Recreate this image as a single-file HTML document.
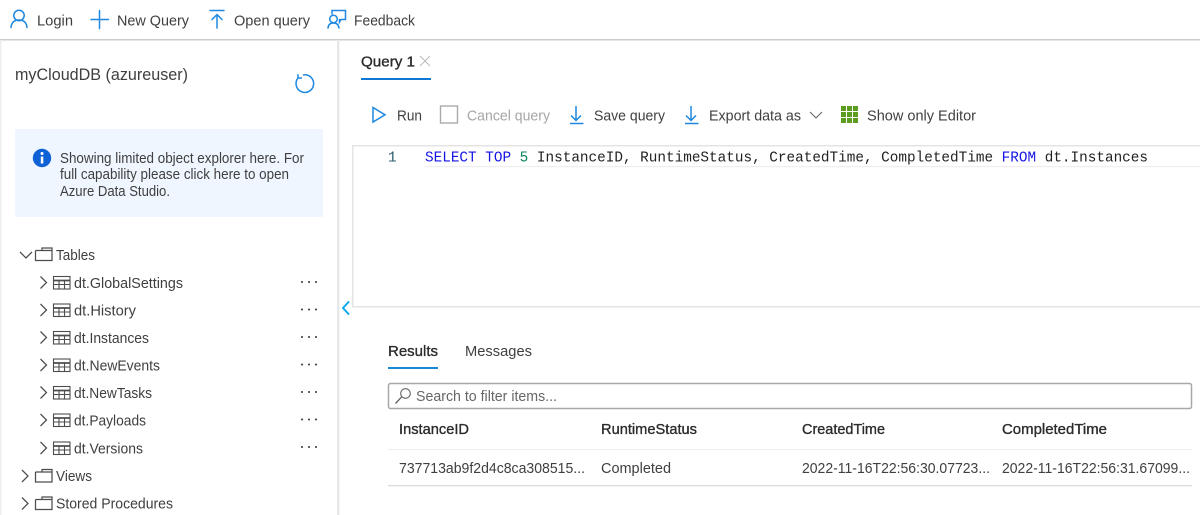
<!DOCTYPE html>
<html><head><meta charset="utf-8"><style>
html,body{margin:0;padding:0;background:#fff;width:1200px;height:515px;overflow:hidden}
svg{display:block}
text{font-family:"Liberation Sans",sans-serif;font-size:15px;fill:#3f3f3f;white-space:pre}
.b{fill:#2b2b2b;font-size:15px;stroke:#2b2b2b;stroke-width:.35}
.m{font-family:"Liberation Mono",monospace;font-size:14.35px;fill:#222}
.i{fill:none;stroke:#1f88e0;stroke-width:1.5}
.k{fill:none;stroke:#4d4d4d;stroke-width:1.25}
.d{fill:#333}
</style></head><body>
<svg width="1200" height="515" viewBox="0 0 1200 515" xmlns="http://www.w3.org/2000/svg">
<rect x="0" y="39" width="1200" height="1.5" fill="#ccc"/>
<rect x="0" y="40" width="1.5" height="475" fill="#eee"/>
<rect x="337" y="40" width="2.5" height="475" fill="#e8e8e8"/>

<!-- top toolbar -->
<g class="i" stroke-linecap="round">
<circle cx="19" cy="15.500" r="5.200"/><path d="M11 27.500c.5-5 3.500-7.500 8-7.500s7.500 2.500 8 7.500"/>
<path d="M99.500 10.500v18M91 19.500h17.500"/>
<path d="M210 10.500h14M217 14.500v13.500M212 19.500l5-5 5 5"/>
<circle cx="333.500" cy="19" r="3.800"/><path d="M328 28c.3-3.500 2.500-5 5.500-5s5 1.500 5.500 5"/><path d="M332 14v-3.500h13.500v9h-4.500l-1.500 2.500v-2.500"/>
</g>
<text x="37" y="25.500" textLength="36" lengthAdjust="spacingAndGlyphs">Login</text>
<text x="117" y="25.500" textLength="72" lengthAdjust="spacingAndGlyphs">New Query</text>
<text x="234" y="25.500" textLength="76" lengthAdjust="spacingAndGlyphs">Open query</text>
<text x="354" y="25.500" textLength="61" lengthAdjust="spacingAndGlyphs">Feedback</text>

<!-- sidebar -->
<text x="15" y="80" style="font-size:16.500px" textLength="173" lengthAdjust="spacingAndGlyphs">myCloudDB (azureuser)</text>
<path class="i" d="M303 75A8.800 8.800 0 1 1 298.500 77.500M298 74.300v3.700h4"/>
<rect x="15" y="129" width="308" height="88" rx="2" fill="#eff6ff"/>
<circle cx="42" cy="158" r="9.200" fill="#0f62d6"/>
<rect x="40.800" y="156.500" width="2.500" height="7" fill="#fff"/><circle cx="42" cy="153.500" r="1.500" fill="#fff"/>
<text x="60" y="163" style="font-size:14.500px" textLength="244" lengthAdjust="spacingAndGlyphs">Showing limited object explorer here. For</text>
<text x="60" y="179" style="font-size:14.500px" textLength="229" lengthAdjust="spacingAndGlyphs">full capability please click here to open</text>
<text x="60" y="196" style="font-size:14.500px" textLength="110" lengthAdjust="spacingAndGlyphs">Azure Data Studio.</text>

<!-- tree -->
<g class="k">
<path d="M20 252l6 6 6-6"/>
<path d="M35.500 250.500h6.500M35.500 250.500v10h16.500v-12.500h-10v2.500M42 250.500h10"/>
<path d="M35.500 472h6.500M35.500 472v10h16.500v-12.500h-10v2.500M42 472h10"/>
<path d="M35.500 499.500h6.500M35.500 499.500v10h16.500v-12.500h-10v2.500M42 499.500h10"/>
<path d="M22 470l6 6-6 6M22 497.500l6 6-6 6"/>
<path d="M40.500 276.500l6 6-6 6M40.500 304l6 6-6 6M40.500 331.500l6 6-6 6M40.500 359l6 6-6 6M40.500 386.500l6 6-6 6M40.500 414l6 6-6 6M40.500 442l6 6-6 6"/>
</g>
<g fill="none" stroke="#4d4d4d" stroke-width="1.100">
<g><rect x="53.500" y="276.500" width="16.500" height="12.500"/><path d="M53.500 280.500h16.500" stroke-width="1.800"/><path d="M53.500 284.500h16.500M59 280.500v8.500M64.500 280.500v8.500"/></g>
<g transform="translate(0 27.500)"><rect x="53.500" y="276.500" width="16.500" height="12.500"/><path d="M53.500 280.500h16.500" stroke-width="1.800"/><path d="M53.500 284.500h16.500M59 280.500v8.500M64.500 280.500v8.500"/></g>
<g transform="translate(0 55)"><rect x="53.500" y="276.500" width="16.500" height="12.500"/><path d="M53.500 280.500h16.500" stroke-width="1.800"/><path d="M53.500 284.500h16.500M59 280.500v8.500M64.500 280.500v8.500"/></g>
<g transform="translate(0 82.500)"><rect x="53.500" y="276.500" width="16.500" height="12.500"/><path d="M53.500 280.500h16.500" stroke-width="1.800"/><path d="M53.500 284.500h16.500M59 280.500v8.500M64.500 280.500v8.500"/></g>
<g transform="translate(0 110)"><rect x="53.500" y="276.500" width="16.500" height="12.500"/><path d="M53.500 280.500h16.500" stroke-width="1.800"/><path d="M53.500 284.500h16.500M59 280.500v8.500M64.500 280.500v8.500"/></g>
<g transform="translate(0 137.500)"><rect x="53.500" y="276.500" width="16.500" height="12.500"/><path d="M53.500 280.500h16.500" stroke-width="1.800"/><path d="M53.500 284.500h16.500M59 280.500v8.500M64.500 280.500v8.500"/></g>
<g transform="translate(0 165.500)"><rect x="53.500" y="276.500" width="16.500" height="12.500"/><path d="M53.500 280.500h16.500" stroke-width="1.800"/><path d="M53.500 284.500h16.500M59 280.500v8.500M64.500 280.500v8.500"/></g>
</g>
<text x="56" y="260" textLength="39" lengthAdjust="spacingAndGlyphs">Tables</text>
<text x="74" y="288" textLength="109" lengthAdjust="spacingAndGlyphs">dt.GlobalSettings</text>
<text x="74" y="315.500" textLength="62" lengthAdjust="spacingAndGlyphs">dt.History</text>
<text x="74" y="343" textLength="75" lengthAdjust="spacingAndGlyphs">dt.Instances</text>
<text x="74" y="370.500" textLength="86" lengthAdjust="spacingAndGlyphs">dt.NewEvents</text>
<text x="74" y="398" textLength="78" lengthAdjust="spacingAndGlyphs">dt.NewTasks</text>
<text x="74" y="425.500" textLength="72" lengthAdjust="spacingAndGlyphs">dt.Payloads</text>
<text x="74" y="453.500" textLength="69" lengthAdjust="spacingAndGlyphs">dt.Versions</text>
<text x="56" y="481" textLength="36" lengthAdjust="spacingAndGlyphs">Views</text>
<text x="56" y="508.500" textLength="117" lengthAdjust="spacingAndGlyphs">Stored Procedures</text>
<g class="d">
<circle cx="302" cy="282" r="1"/><circle cx="309" cy="282" r="1"/><circle cx="316" cy="282" r="1"/>
<circle cx="302" cy="309.500" r="1"/><circle cx="309" cy="309.500" r="1"/><circle cx="316" cy="309.500" r="1"/>
<circle cx="302" cy="337" r="1"/><circle cx="309" cy="337" r="1"/><circle cx="316" cy="337" r="1"/>
<circle cx="302" cy="364.500" r="1"/><circle cx="309" cy="364.500" r="1"/><circle cx="316" cy="364.500" r="1"/>
<circle cx="302" cy="392" r="1"/><circle cx="309" cy="392" r="1"/><circle cx="316" cy="392" r="1"/>
<circle cx="302" cy="419.500" r="1"/><circle cx="309" cy="419.500" r="1"/><circle cx="316" cy="419.500" r="1"/>
<circle cx="302" cy="447" r="1"/><circle cx="309" cy="447" r="1"/><circle cx="316" cy="447" r="1"/>
</g>
<path d="M349 301.500l-6 6.500 6 6.500" fill="none" stroke="#00a4ef" stroke-width="1.800"/>

<!-- query tab -->
<text x="361" y="66.500" class="b" textLength="54" lengthAdjust="spacingAndGlyphs">Query 1</text>
<path d="M420 56l10 10M430 56l-10 10" stroke="#bbb" stroke-width="1" fill="none"/>
<rect x="361" y="78" width="70" height="2" fill="#0f78d4"/>

<!-- query toolbar -->
<path d="M373 107.500v14.500l12-7.200z" class="i"/>
<text x="397" y="120.500" textLength="25" lengthAdjust="spacingAndGlyphs">Run</text>
<rect x="440.500" y="106" width="17" height="17" fill="none" stroke="#aaa" stroke-width="1.400"/>
<text x="467" y="120.500" style="fill:#a6a6a6" textLength="83" lengthAdjust="spacingAndGlyphs">Cancel query</text>
<path class="i" d="M576 106v14M571 115.500l5 5 5-5M570 123.500h13.500"/>
<text x="594" y="120.500" textLength="71" lengthAdjust="spacingAndGlyphs">Save query</text>
<path class="i" d="M691 106v14M686 115.500l5 5 5-5M685 123.500h13.500"/>
<text x="709" y="120.500" textLength="92" lengthAdjust="spacingAndGlyphs">Export data as</text>
<path d="M810 112l6 6 6-6" fill="none" stroke="#666" stroke-width="1.100"/>
<g fill="#5c9c1e">
<rect x="841" y="106" width="5" height="5"/><rect x="847" y="106" width="5" height="5"/><rect x="853" y="106" width="5" height="5"/>
<rect x="841" y="112" width="5" height="5"/><rect x="847" y="112" width="5" height="5"/><rect x="853" y="112" width="5" height="5"/>
<rect x="841" y="118" width="5" height="5"/><rect x="847" y="118" width="5" height="5"/><rect x="853" y="118" width="5" height="5"/>
</g>
<text x="867" y="120.500" textLength="109" lengthAdjust="spacingAndGlyphs">Show only Editor</text>

<!-- editor -->
<rect x="352" y="145" width="848" height="1.500" fill="#e4e4e4"/>
<rect x="352" y="145" width="1.500" height="162" fill="#e4e4e4"/>
<rect x="352" y="306" width="848" height="1.500" fill="#e4e4e4"/>
<rect x="425" y="166" width="775" height="1.200" fill="#eee"/>
<text x="388" y="161.500" class="m" style="fill:#2b5b6b">1</text>
<text x="425" y="161.500" class="m" textLength="723"><tspan style="fill:#1414e6">SELECT TOP</tspan> <tspan style="fill:#098658">5</tspan> InstanceID, RuntimeStatus, CreatedTime, CompletedTime <tspan style="fill:#1414e6">FROM</tspan> dt.Instances</text>

<!-- results -->
<text x="388" y="356" class="b" textLength="50" lengthAdjust="spacingAndGlyphs">Results</text>
<text x="465" y="356" textLength="67" lengthAdjust="spacingAndGlyphs">Messages</text>
<rect x="388" y="367" width="50" height="2" fill="#1a8ad8"/>
<rect x="388.500" y="383.500" width="803" height="25" rx="2" fill="#fff" stroke="#a8a8a8" stroke-width="1.500"/>
<circle cx="405.500" cy="393.500" r="4.800" fill="none" stroke="#666" stroke-width="1.100"/>
<path d="M401.500 397l-6 6.500" stroke="#666" stroke-width="1.300" fill="none"/>
<text x="416" y="401" style="fill:#666" textLength="141" lengthAdjust="spacingAndGlyphs">Search to filter items...</text>
<text x="399" y="434" class="b" textLength="70" lengthAdjust="spacingAndGlyphs">InstanceID</text>
<text x="601" y="434" class="b" textLength="96" lengthAdjust="spacingAndGlyphs">RuntimeStatus</text>
<text x="802" y="434" class="b" textLength="83" lengthAdjust="spacingAndGlyphs">CreatedTime</text>
<text x="1002" y="434" class="b" textLength="105" lengthAdjust="spacingAndGlyphs">CompletedTime</text>
<rect x="388" y="449" width="804" height="1" fill="#eee"/>
<text x="399" y="473" textLength="186" lengthAdjust="spacingAndGlyphs">737713ab9f2d4c8ca308515...</text>
<text x="601" y="473" textLength="70" lengthAdjust="spacingAndGlyphs">Completed</text>
<text x="802" y="473" textLength="188" lengthAdjust="spacingAndGlyphs">2022-11-16T22:56:30.07723...</text>
<text x="1002" y="473" textLength="188" lengthAdjust="spacingAndGlyphs">2022-11-16T22:56:31.67099...</text>
<rect x="388" y="485" width="804" height="1.300" fill="#ddd"/>
</svg>
</body></html>
